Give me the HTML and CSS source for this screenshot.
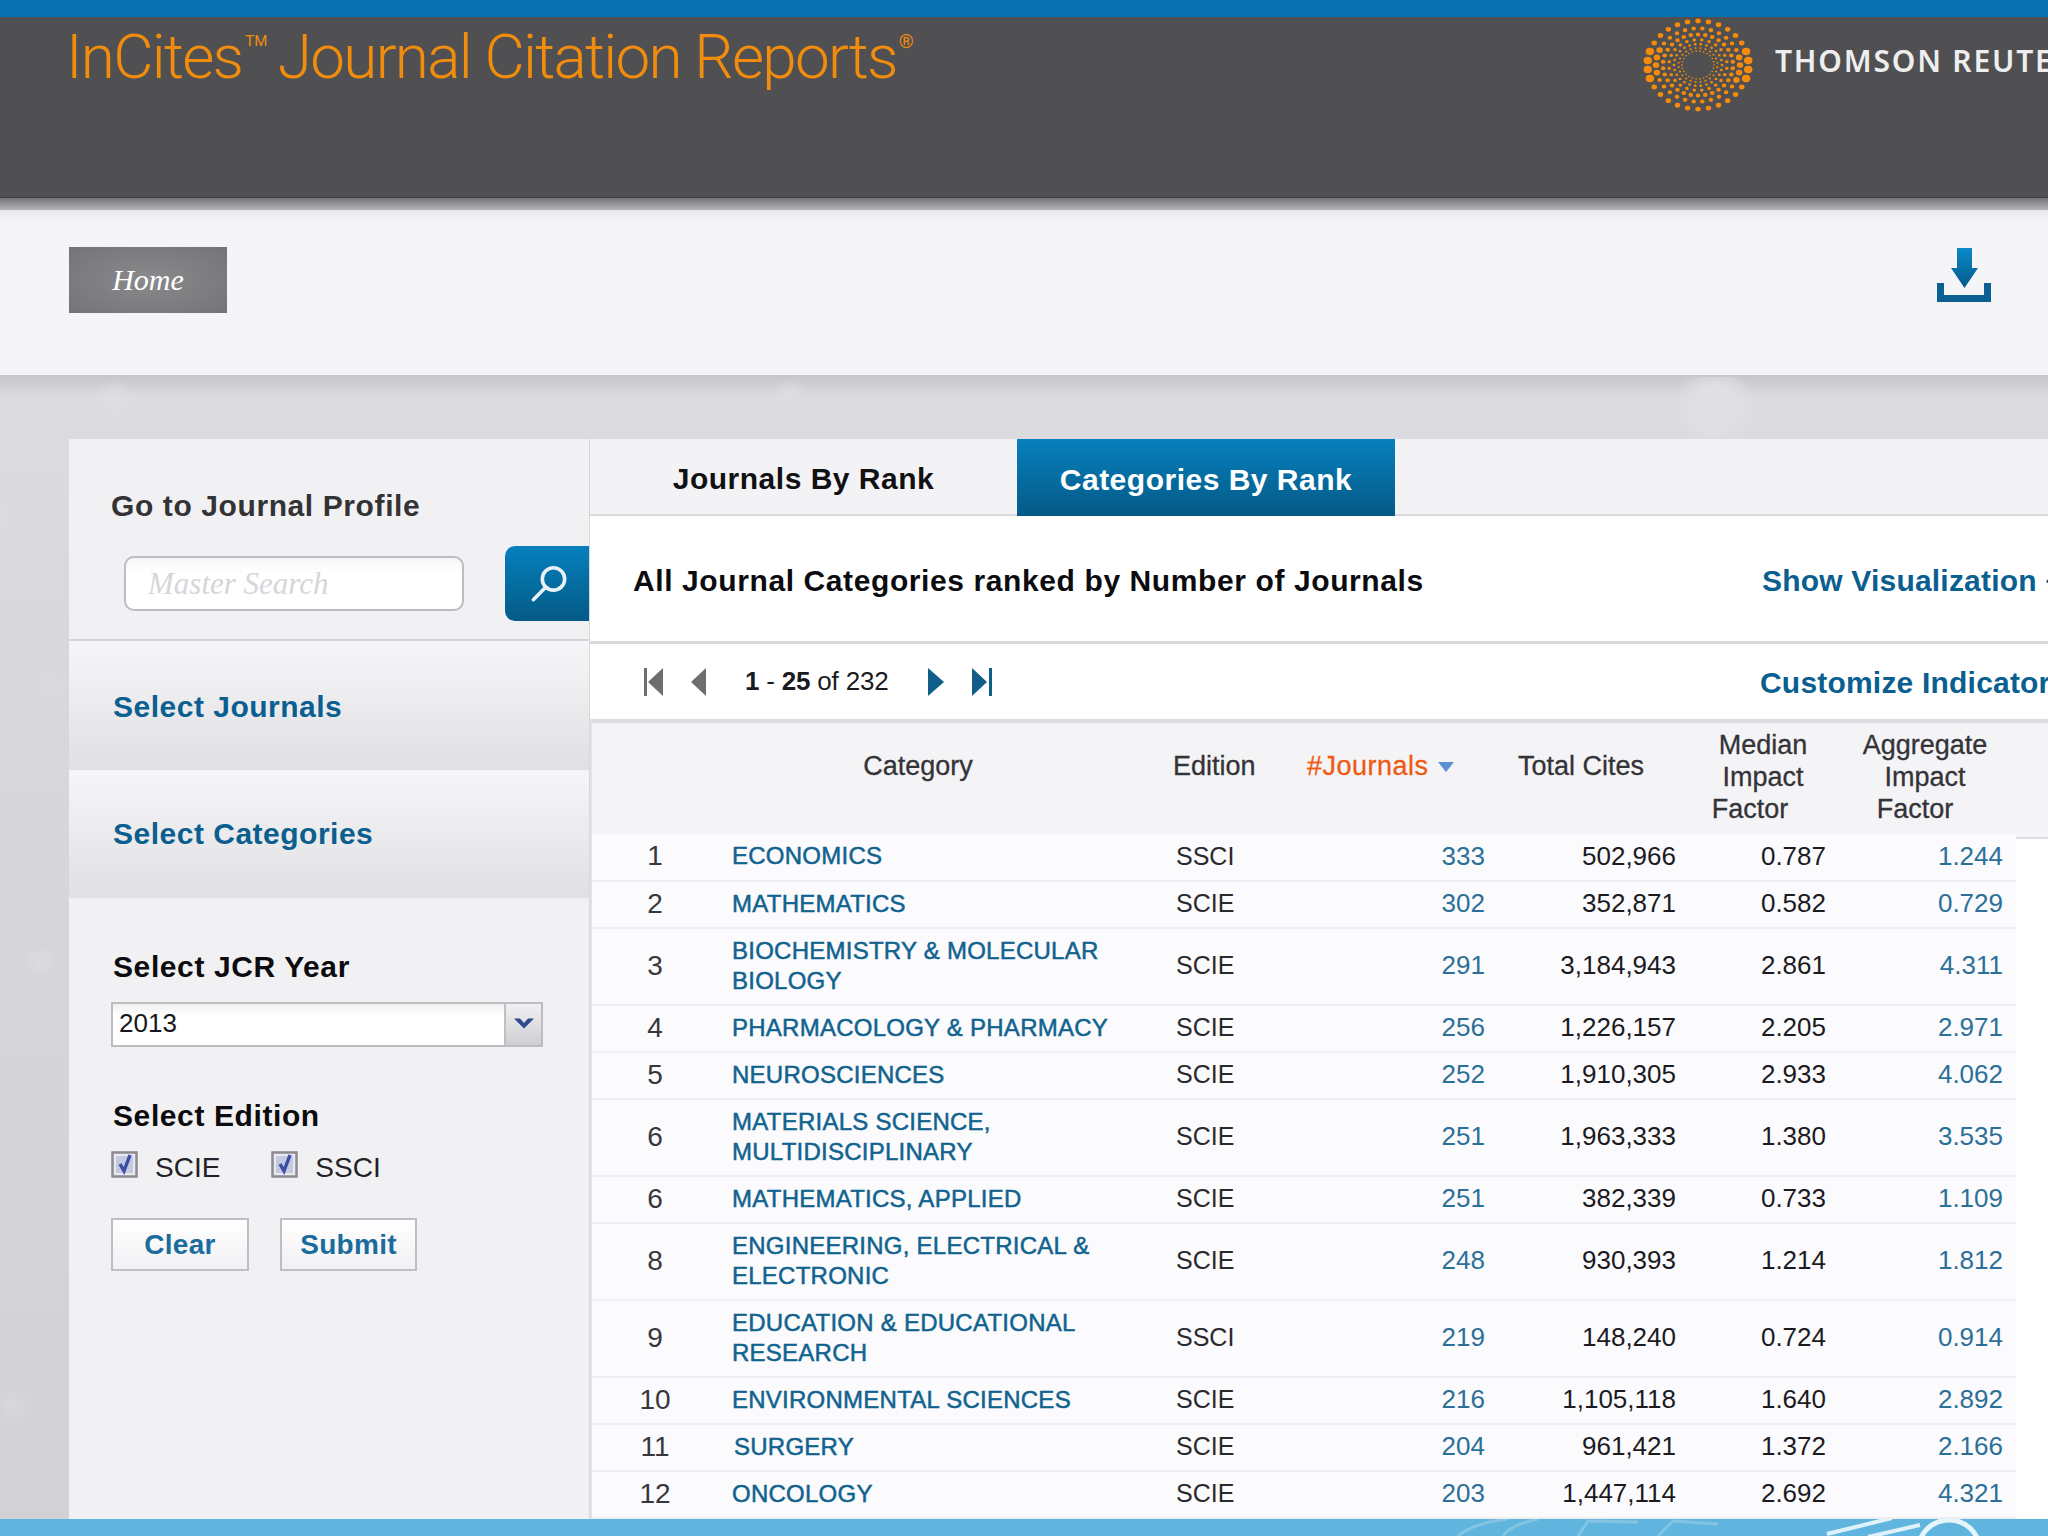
FILE: index.html
```html
<!DOCTYPE html>
<html lang="en">
<head>
<meta charset="utf-8">
<title>InCites Journal Citation Reports</title>
<link rel="stylesheet" href="styles.css">
</head>
<body>
<div class="page">
  <div class="topbar"></div>
  <header class="brand">
    <div class="wordmark">InCites<sup class="tm">TM</sup> <span class="wm-rest">Journal Citation Reports</span><sup class="reg">®</sup></div>
    <div class="tr">
      <svg class="globe" viewBox="0 0 110 110" preserveAspectRatio="none" fill="none" stroke="#f58a0b" stroke-linecap="round">
        <circle cx="55" cy="55" r="50.500" pathLength="30" stroke-dasharray="0 1" stroke-dashoffset="1.500" stroke-width="5.500"/>
        <circle cx="55" cy="55" r="50.500" pathLength="30" stroke-dasharray="0 1 0 1 0 1 0 12" stroke-dashoffset="1.500" stroke-width="8.500"/>
        <circle cx="55" cy="55" r="42" pathLength="30" stroke-dasharray="0 1" stroke-dashoffset="1" stroke-width="4.600"/>
        <circle cx="55" cy="55" r="42" pathLength="30" stroke-dasharray="0 1 0 1 0 1 0 12" stroke-dashoffset="1" stroke-width="6.500"/>
        <circle cx="55" cy="55" r="35" pathLength="30" stroke-dasharray="0 1" stroke-dashoffset="1.500" stroke-width="4.600"/>
        <circle cx="55" cy="55" r="29" pathLength="24" stroke-dasharray="0 1" stroke-dashoffset=".5" stroke-width="3.600"/>
        <circle cx="55" cy="55" r="24" pathLength="26" stroke-dasharray="0 1" stroke-width="2.800"/>
        <circle cx="55" cy="55" r="19.500" pathLength="24" stroke-dasharray="0 1" stroke-dashoffset=".5" stroke-width="2.200"/>
        <circle cx="55" cy="55" r="16" pathLength="26" stroke-dasharray="0 1" stroke-width="1.800"/>
      </svg>
      <span class="tr-name">THOMSON REUTERS</span>
    </div>
  </header>
  <nav class="nav">
    <a class="home">Home</a>
    <svg class="download" viewBox="0 0 54 54">
      <defs><linearGradient id="dl" x1="0" y1="0" x2="0" y2="1"><stop offset="0" stop-color="#0a8ac8"/><stop offset="1" stop-color="#05588a"/></linearGradient></defs>
      <path d="M20 0H35V20H41L27.500 40L14 20H20Z" fill="url(#dl)"/>
      <path d="M0 35H7V47H47V35H54V54H0Z" fill="#0b5f92"/>
    </svg>
  </nav>
  <div class="workspace">
    <aside class="sidebar">
      <section class="sb-search">
        <h2 class="sb-title">Go to Journal Profile</h2>
        <div class="search-row">
          <input class="search-input" type="text" placeholder="Master Search">
          <button class="search-btn" aria-label="Search">
            <svg viewBox="0 0 34 34" width="38" height="38" fill="none" stroke="#e9f1f6" stroke-width="3.200" stroke-linecap="round"><circle cx="21" cy="12.500" r="10"/><path d="M14 20L3 31"/></svg>
          </button>
        </div>
      </section>
      <a class="sb-link sb-journals">Select Journals</a>
      <a class="sb-link">Select Categories</a>
      <section class="sb-filters">
        <h3 class="sb-label">Select JCR Year</h3>
        <div class="year-select">
          <span class="year-value">2013</span>
          <span class="year-arrow"><svg viewBox="0 0 20 12" width="20" height="12"><path d="M0 1.500H6L10 6L14 1.500H20L10 11.500Z" fill="#2e4a8c"/></svg></span>
        </div>
        <h3 class="sb-label edition-label">Select Edition</h3>
        <div class="editions">
          <label class="edition"><span class="check"><svg viewBox="0 0 27 27" width="27" height="27"><rect x="1.500" y="1.500" width="24" height="24" fill="#e8e8f0" stroke="#8b8b90" stroke-width="2.500"/><rect x="5" y="5" width="17" height="17" fill="#c5c9e0"/><path d="M9 13L13 20L19 4" fill="none" stroke="#3a4fa0" stroke-width="3.400"/></svg></span>SCIE</label>
          <label class="edition"><span class="check"><svg viewBox="0 0 27 27" width="27" height="27"><rect x="1.500" y="1.500" width="24" height="24" fill="#e8e8f0" stroke="#8b8b90" stroke-width="2.500"/><rect x="5" y="5" width="17" height="17" fill="#c5c9e0"/><path d="M9 13L13 20L19 4" fill="none" stroke="#3a4fa0" stroke-width="3.400"/></svg></span>SSCI</label>
        </div>
        <div class="actions">
          <button class="action clear">Clear</button>
          <button class="action submit">Submit</button>
        </div>
      </section>
    </aside>
    <main class="content">
      <div class="tabs">
        <a class="tab">Journals By Rank</a>
        <a class="tab active">Categories By Rank</a>
      </div>
      <div class="title-row">
        <h1 class="title">All Journal Categories ranked by Number of Journals</h1>
        <a class="side-link">Show Visualization +</a>
      </div>
      <div class="pager-row">
        <div class="pager">
          <svg class="pg first" viewBox="0 0 20 28" width="20" height="28"><path d="M0 0H3V28H0ZM19 0V28L4 14Z" fill="#6e6e70"/></svg>
          <svg class="pg prev" viewBox="0 0 16 28" width="16" height="28"><path d="M15 0V28L0 14Z" fill="#6e6e70"/></svg>
          <span class="pg-text"><b>1</b> - <b>25</b> of 232</span>
          <svg class="pg next" viewBox="0 0 16 28" width="16" height="28"><path d="M0 0V28L16 14Z" fill="#0f5f8a"/></svg>
          <svg class="pg last" viewBox="0 0 20 28" width="20" height="28"><path d="M0 0V28L15 14ZM17 0H20V28H17Z" fill="#0f5f8a"/></svg>
        </div>
        <a class="side-link">Customize Indicators</a>
      </div>
      <div class="grid-wrap">
      <table class="grid">
        <colgroup>
          <col class="c-rank"><col class="c-cat"><col class="c-ed"><col class="c-jr"><col class="c-tc"><col class="c-mif"><col class="c-aif">
        </colgroup>
        <thead>
          <tr>
            <th></th>
            <th class="h-cat">Category</th>
            <th class="h-ed">Edition</th>
            <th class="h-jr">#Journals <span class="sort"></span></th>
            <th class="h-tc">Total Cites</th>
            <th class="h-mif">Median<br>Impact<br><span class="h-factor">Factor</span></th>
            <th class="h-aif">Aggregate<br>Impact<br><span class="h-factor">Factor</span></th>
          </tr>
        </thead>
        <tbody>
          <tr><td class="rank">1</td><td class="cat">ECONOMICS</td><td class="ed">SSCI</td><td class="num link">333</td><td class="num">502,966</td><td class="num">0.787</td><td class="num link last-col">1.244</td></tr>
          <tr><td class="rank">2</td><td class="cat">MATHEMATICS</td><td class="ed">SCIE</td><td class="num link">302</td><td class="num">352,871</td><td class="num">0.582</td><td class="num link last-col">0.729</td></tr>
          <tr class="tall"><td class="rank">3</td><td class="cat">BIOCHEMISTRY &amp; MOLECULAR BIOLOGY</td><td class="ed">SCIE</td><td class="num link">291</td><td class="num">3,184,943</td><td class="num">2.861</td><td class="num link last-col">4.311</td></tr>
          <tr><td class="rank">4</td><td class="cat">PHARMACOLOGY &amp; PHARMACY</td><td class="ed">SCIE</td><td class="num link">256</td><td class="num">1,226,157</td><td class="num">2.205</td><td class="num link last-col">2.971</td></tr>
          <tr><td class="rank">5</td><td class="cat">NEUROSCIENCES</td><td class="ed">SCIE</td><td class="num link">252</td><td class="num">1,910,305</td><td class="num">2.933</td><td class="num link last-col">4.062</td></tr>
          <tr class="tall"><td class="rank">6</td><td class="cat">MATERIALS SCIENCE,<br>MULTIDISCIPLINARY</td><td class="ed">SCIE</td><td class="num link">251</td><td class="num">1,963,333</td><td class="num">1.380</td><td class="num link last-col">3.535</td></tr>
          <tr><td class="rank">6</td><td class="cat">MATHEMATICS, APPLIED</td><td class="ed">SCIE</td><td class="num link">251</td><td class="num">382,339</td><td class="num">0.733</td><td class="num link last-col">1.109</td></tr>
          <tr class="tall"><td class="rank">8</td><td class="cat">ENGINEERING, ELECTRICAL &amp;<br>ELECTRONIC</td><td class="ed">SCIE</td><td class="num link">248</td><td class="num">930,393</td><td class="num">1.214</td><td class="num link last-col">1.812</td></tr>
          <tr class="tall"><td class="rank">9</td><td class="cat">EDUCATION &amp; EDUCATIONAL<br>RESEARCH</td><td class="ed">SSCI</td><td class="num link">219</td><td class="num">148,240</td><td class="num">0.724</td><td class="num link last-col">0.914</td></tr>
          <tr><td class="rank">10</td><td class="cat">ENVIRONMENTAL SCIENCES</td><td class="ed">SCIE</td><td class="num link">216</td><td class="num">1,105,118</td><td class="num">1.640</td><td class="num link last-col">2.892</td></tr>
          <tr><td class="rank">11</td><td class="cat surgery">SURGERY</td><td class="ed">SCIE</td><td class="num link">204</td><td class="num">961,421</td><td class="num">1.372</td><td class="num link last-col">2.166</td></tr>
          <tr><td class="rank">12</td><td class="cat">ONCOLOGY</td><td class="ed">SCIE</td><td class="num link">203</td><td class="num">1,447,114</td><td class="num">2.692</td><td class="num link last-col">4.321</td></tr>
        </tbody>
      </table>
      </div>
    </main>
  </div>
  <footer class="footer">
    <svg class="foot-art" viewBox="0 0 600 17" width="600" height="17" fill="none">
      <path d="M10 17Q25 4 60 0M55 17Q62 6 90 0M130 17L140 2L190 3M210 17L225 2L270 5" stroke="#84c4e3" stroke-width="3"/>
      <path d="M379 15L444 -1M420 18L472 6" stroke="#dff1fa" stroke-width="4"/>
      <circle cx="501" cy="32" r="31" stroke="#e6f4fb" stroke-width="5"/>
    </svg>
  </footer>
</div>
</body>
</html>
```
FILE: styles.css
```css
* { box-sizing: border-box; }
html, body { margin: 0; padding: 0; }
body { width: 2048px; height: 1536px; overflow: hidden; font-family: "Liberation Sans", Arial, sans-serif; background: #dbdbdf; }
.page { width: 2048px; height: 1536px; display: flex; flex-direction: column; overflow: hidden; }
.topbar { height: 17px; background: #0670b0; flex: none; }

.brand { height: 181px; flex: none; background: #505052; border-bottom: 1px solid #3f3f41; display: flex; justify-content: space-between; position: relative; z-index: 2; }
.wordmark { font-family: Roboto, "Open Sans", sans-serif; font-weight: 300; font-size: 62px; letter-spacing: -1.7px; line-height: 80px; color: #f28c0c; white-space: nowrap; margin-left: 66px; }
.wm-rest { margin-left: -3px; }
.tm { font-size: 15px; font-weight: 400; letter-spacing: 0; vertical-align: 32px; line-height: 0; margin-left: 3px; }
.reg { font-size: 19px; font-weight: 400; letter-spacing: 0; vertical-align: 30px; line-height: 0; margin-left: 2px; }
.tr { display: flex; align-items: flex-start; flex: none; width: 405px; margin-left: -400px; }
.globe { width: 110px; height: 96px; flex: none; display: block; }
.tr-name { font-family: "Noto Sans", "Open Sans", sans-serif; font-weight: 600; font-size: 30px; letter-spacing: 1.8px; color: #eeeeee; white-space: nowrap; margin-left: 22px; margin-top: 24px; line-height: 40px; }

.nav { height: 179px; flex: none; background: linear-gradient(#747476 0, #b4b4b6 12px, #e9e9eb 12px, #f5f5f8 24px, #f5f5f8 100%); border-bottom: 2px solid #c9c9cc; display: flex; align-items: center; justify-content: space-between; padding: 0 57px 14px 69px; }
.home { width: 158px; height: 66px; background: radial-gradient(ellipse at center, #8a8a8c 0, #747476 100%); color: #fff; font-family: "Liberation Serif", serif; font-style: italic; font-size: 30px; display: flex; align-items: center; justify-content: center; }
.download { width: 54px; height: 54px; margin-bottom: 10px; flex: none; }

.workspace { flex: 1; min-height: 0; display: flex; align-items: stretch; padding: 62px 0 0 69px; overflow: hidden;
  background:
    radial-gradient(circle at 115px 22px, #dfdfe2 0, transparent 20px),
    radial-gradient(circle at 1715px 30px, #e0e0e3 0, #e0e0e3 20px, transparent 42px),
    radial-gradient(circle at 790px 18px, #dedee1 0, transparent 16px),
    radial-gradient(circle at 0 140px, #dcdcdf 0, transparent 18px),
    radial-gradient(circle at 50px 310px, #dbdbde 0, transparent 20px),
    radial-gradient(circle at 40px 585px, #dcdcdf 0, transparent 18px),
    radial-gradient(circle at 15px 1030px, #d9d9dc 0, transparent 20px),
    linear-gradient(#c8c8cb 0, #dcdce0 20px, #d8d8dc 300px, #d2d2d5 100%);
}
.sidebar { width: 521px; flex: none; background: #f1f1f3; border-right: 1px solid #d7d7da; display: flex; flex-direction: column; }
.sb-search { height: 202px; flex: none; padding: 47px 0 0 42px; border-bottom: 2px solid #d5d5d9; }
.sb-title { margin: 0; font-size: 30px; line-height: 40px; font-weight: 700; color: #333336; letter-spacing: 0.6px; }
.search-row { display: flex; align-items: center; margin-top: 20px; height: 75px; }
.search-input { width: 340px; height: 55px; margin-left: 13px; border: 2px solid #bdbdc1; border-radius: 10px; background: linear-gradient(#f6f6f7, #fff 30%); padding: 0 22px; font-family: "Liberation Serif", serif; font-style: italic; font-size: 31px; outline: none; }
.search-input::placeholder { color: #d6d6da; opacity: 1; }
.search-btn { width: 84px; height: 75px; margin-left: 41px; border: 0; padding: 0 0 0 4px; border-radius: 10px 0 0 10px; background: linear-gradient(#0680bd, #045a86); display: flex; align-items: center; justify-content: center; }
.sb-link { height: 128.500px; flex: none; display: flex; align-items: center; padding-left: 44px; font-size: 30px; font-weight: 700; color: #0a5f90; letter-spacing: 0.5px; background: linear-gradient(#f6f6f8, #e0e0e3); }
.sb-journals { padding-top: 3px; }
.sb-filters { flex: 1; padding: 49px 0 0 42px; }
.sb-label { margin: 0 0 0 2px; font-size: 30px; line-height: 40px; font-weight: 700; color: #0c0c0e; letter-spacing: 0.6px; }
.year-select { width: 432px; height: 45px; margin-top: 15px; border: 2px solid #bcbcc2; background: linear-gradient(#eef0ee, #fff 30%); display: flex; justify-content: space-between; align-items: stretch; }
.year-value { font-size: 26px; line-height: 39px; padding-left: 6px; color: #17171b; }
.year-arrow { width: 37px; background: linear-gradient(#f0f0f2, #cfcfd3); border-left: 2px solid #c0c0c4; display: flex; align-items: flex-start; justify-content: center; padding-top: 13px; }
.edition-label { margin-top: 49px; }
.editions { display: flex; gap: 51px; margin-top: 15px; }
.edition { display: flex; align-items: flex-start; gap: 17px; font-size: 28px; line-height: 34px; color: #222226; }
.check { width: 27px; height: 27px; flex: none; display: block; }
.check svg { display: block; }
.actions { display: flex; gap: 31px; margin-top: 33px; }
.action { height: 53px; border: 2px solid #bdbdc3; background: linear-gradient(#fff, #f1f1f4); font-family: "Liberation Sans", sans-serif; font-weight: 700; font-size: 28px; color: #1a6c9c; letter-spacing: 0.3px; padding: 0; }
.clear { width: 138px; }
.submit { width: 137px; }

.content { flex: 1; min-width: 0; background: #fff; display: flex; flex-direction: column; overflow: hidden; }
.tabs { height: 77px; flex: none; background: #f3f3f5; border-bottom: 2px solid #dadade; display: flex; }
.tab { width: 427px; height: 75px; display: flex; align-items: center; justify-content: center; font-size: 30px; font-weight: 700; color: #111114; letter-spacing: 0.5px; padding-top: 5px; }
.tab.active { width: 378px; height: 77px; color: #fff; background: linear-gradient(#0680bd, #045a86); }
.title-row { height: 128px; flex: none; border-bottom: 3px solid #d8d8dc; display: flex; align-items: center; justify-content: space-between; padding: 4px 0 0 43px; overflow: hidden; }
.title { margin: 0; font-size: 30px; font-weight: 700; color: #0c0c10; white-space: nowrap; letter-spacing: 0.6px; }
.side-link { font-size: 30px; font-weight: 700; color: #0a5f90; white-space: nowrap; letter-spacing: 0.2px; flex: none; }
.title-row .side-link { margin-right: -8px; width: 294px; }
.pager-row { height: 75px; flex: none; display: flex; align-items: center; justify-content: space-between; padding: 0 0 0 54px; overflow: hidden; }
.pager-row .side-link { width: 288px; margin-top: 2px; }
.pager { display: flex; align-items: center; }
.pg { display: block; flex: none; }
.prev { margin-left: 27px; }
.pg-text { margin-left: 38px; margin-right: 40px; font-size: 26px; letter-spacing: -0.2px; color: #1b1b1f; white-space: nowrap; }
.last { margin-left: 28px; }

.grid-wrap { position: relative; flex: none; border-left: 2px solid #e3e3e6; }
.grid-wrap::before { content: ""; position: absolute; left: 0; right: 0; top: 0; height: 114px; background: #f4f4f6; border-top: 4px solid #dcdce0; border-bottom: 2px solid #dedee2; }
.grid { position: relative; width: 1424px; border-collapse: collapse; table-layout: fixed; font-size: 26px; }
.c-rank { width: 126px; } .c-cat { width: 458px; } .c-ed { width: 130px; } .c-jr { width: 179px; } .c-tc { width: 191px; } .c-mif { width: 150px; } .c-aif { width: 190px; }
.grid thead tr { height: 115px; }
.grid th { font-weight: 400; font-size: 27px; line-height: 32px; color: #333338; padding: 0; vertical-align: middle; -webkit-text-stroke: 0.3px #333338; }
.h-cat { text-align: center; padding: 0 58px 21px 0 !important; }
.h-ed { text-align: left; padding: 0 0 21px 0 !important; text-indent: -3px; }
.h-jr { text-align: left; color: #ef5a12 !important; -webkit-text-stroke: 0.3px #ef5a12 !important; white-space: nowrap; letter-spacing: 0.5px; padding: 0 0 21px 1px !important; }
.sort { display: inline-block; width: 0; height: 0; border-left: 8px solid transparent; border-right: 8px solid transparent; border-top: 10px solid #5e8fd0; margin-left: 1px; vertical-align: 3px; }
.h-tc { text-align: right; padding: 0 32px 21px 0 !important; white-space: nowrap; }
.h-mif { text-align: center; padding-left: 24px !important; }
.h-aif { text-align: center; padding-left: 8px !important; }
.h-factor { display: inline-block; }
.h-mif .h-factor { margin-right: 26px; }
.h-aif .h-factor { margin-right: 20px; }
.grid tbody tr { height: 47px; background: #fbfafc; border-bottom: 2px solid #efeff2; }
.grid tbody tr.tall { height: 77px; }
.grid td { padding: 0 0 2px; vertical-align: middle; }
.rank { font-size: 28px; text-align: center; color: #38383c; }
.cat { font-size: 24px; line-height: 30px; letter-spacing: 0.25px; color: #11638f; padding-left: 14px !important; padding-right: 30px !important; -webkit-text-stroke: 0.5px #11638f; }
.surgery { padding-left: 16px !important; }
.ed { font-size: 25px; color: #2a2a2e; }
.num { text-align: right; color: #1b1b1f; }
.num.link { color: #2b7099; }
.last-col { padding-right: 13px !important; }

.footer { height: 17px; flex: none; background: #5fb5dd; position: relative; overflow: hidden; }
.foot-art { position: absolute; right: 0; top: 0; }
```
